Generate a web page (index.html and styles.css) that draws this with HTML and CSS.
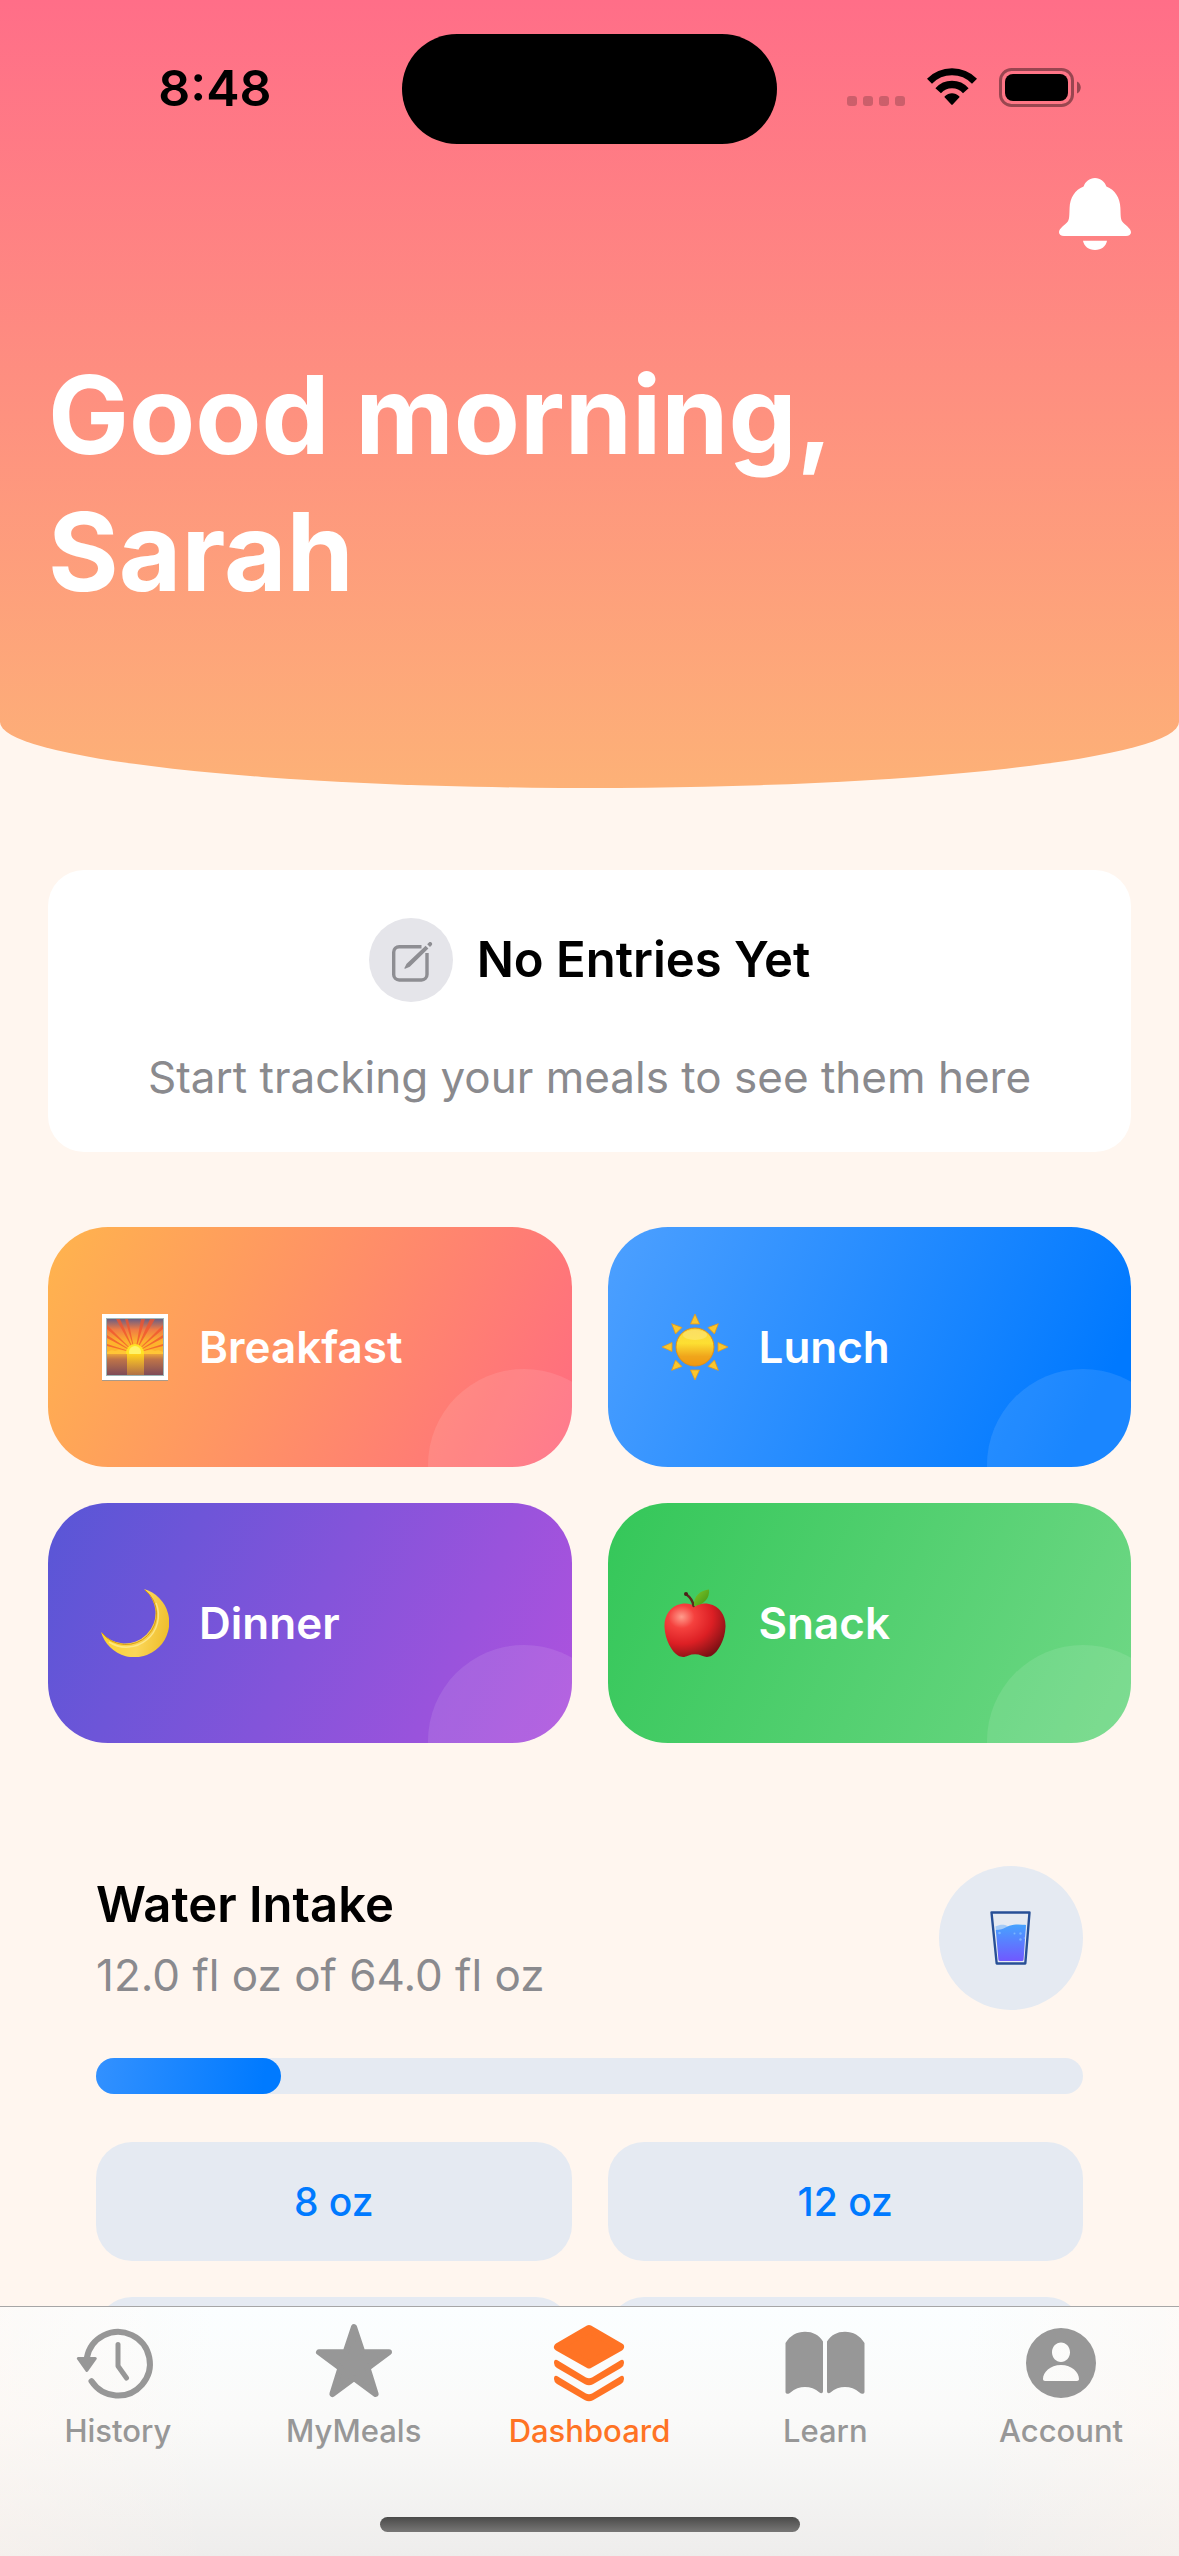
FILE: index.html
```html
<!DOCTYPE html>
<html lang="en">
<head>
<meta charset="utf-8">
<meta name="viewport" content="width=device-width, initial-scale=1">
<title>Dashboard</title>
<link rel="stylesheet" href="styles.css">
</head>
<body>
<div class="app">
  <div class="scroll">
    <header class="hero">
      <div class="status">
        <span class="status-side time">8:48</span>
        <span class="island"></span>
        <span class="status-side">
          <svg width="58" height="38" viewBox="0 0 58 38" fill="#000" fill-opacity=".2" aria-hidden="true">
            <rect x="0" y="28" width="10" height="10" rx="3"/><rect x="16" y="28" width="10" height="10" rx="3"/><rect x="32" y="28" width="10" height="10" rx="3"/><rect x="48" y="28" width="10" height="10" rx="3"/>
          </svg>
          <svg width="50" height="38" viewBox="0 0 50 38" fill="none" stroke="#000" aria-hidden="true">
            <path stroke-width="7" d="M2.500 13.200A31.500 31.500 0 0 1 47.500 13.200"/>
            <path stroke-width="7.500" d="M11.200 22.800A18.500 18.500 0 0 1 38.800 22.800"/>
            <path fill="#000" stroke="none" d="M17.800 29.600c-.5-.5-.5-1 0-1.400 4.200-4 10.200-4 14.400 0 .5.4.5.9 0 1.400L25.700 36.600c-.4.4-1 .4-1.400 0z"/>
          </svg>
          <svg width="82" height="39" viewBox="0 0 82 39" aria-hidden="true">
            <rect x="1.500" y="1.500" width="72" height="36" rx="11" fill="none" stroke="#000" stroke-opacity=".4" stroke-width="3"/>
            <rect x="6" y="6" width="63" height="27" rx="8"/>
            <path fill-opacity=".4" d="M78 13.500c5 2 5 10 0 12z"/>
          </svg>
        </span>
      </div>
      <div class="hero-actions">
        <button class="bell" type="button" aria-label="Notifications">
          <svg width="72" height="72" viewBox="0 0 72 72" fill="#fff" aria-hidden="true">
            <path d="M36 0c5.500 0 9.700 3.600 11.400 8.500C56 11.500 61 20 61.400 30c.3 7 .1 11 1.800 13.500 2.400 3.400 8.800 6.500 8.800 10.800 0 2.300-2 3.700-5 3.700H5c-3 0-5-1.400-5-3.700 0-4.300 6.400-7.400 8.800-10.800 1.700-2.500 1.500-6.500 1.800-13.500C11 20 16 11.500 24.600 8.500 26.300 3.600 30.500 0 36 0z"/>
            <path d="M24 62.700h24c-1 5.300-5.500 9.300-12 9.300s-11-4-12-9.300z"/>
          </svg>
        </button>
      </div>
      <h1 class="greeting">Good morning,<br>Sarah</h1>
    </header>

    <main class="content">
      <section class="empty">
        <div class="empty-head">
          <span class="empty-icon">
            <svg width="48" height="48" viewBox="0 0 48 48" fill="none" stroke="#8e8e93" stroke-width="3.400" aria-hidden="true">
              <path d="M34.500 10.700H12.200a5.500 5.500 0 0 0-5.500 5.500v22.300a5.500 5.500 0 0 0 5.500 5.500h22.300a5.500 5.500 0 0 0 5.500-5.500V17"/>
              <path fill="#8e8e93" stroke="none" d="M38.600 9.700l2.800 2.800-18.600 18.300-4.600 2c-.6.200-1-.2-.8-.8l2.200-4.200zM40.200 8.200l1.700-1.700c1.800-1.600 4.400 1 2.800 2.800L43 11z"/>
            </svg>
          </span>
          <h2 class="title">No Entries Yet</h2>
        </div>
        <p class="subtitle">Start tracking your meals to see them here</p>
      </section>

      <section class="meals">
        <button class="meal breakfast" type="button">
          <svg width="68" height="68" viewBox="0 0 68 68" aria-hidden="true">
            <defs>
              <linearGradient id="sky" x2="0" y2="1"><stop offset="0" stop-color="#6a5f83"/><stop offset=".3" stop-color="#ef7b45"/><stop offset=".65" stop-color="#fdb32c"/></linearGradient>
              <linearGradient id="sea" x2="0" y2="1"><stop offset="0" stop-color="#eaa13a"/><stop offset=".25" stop-color="#bf7448"/><stop offset="1" stop-color="#7f4b58"/></linearGradient>
              <linearGradient id="glint" x2="0" y2="1"><stop offset="0" stop-color="#ffd21f"/><stop offset="1" stop-color="#d08a3a" stop-opacity=".6"/></linearGradient>
            </defs>
            <rect x="1" y="2" width="66" height="66" fill="#a99a8a"/>
            <rect x="1" y="1" width="66" height="66" fill="#fff"/>
            <rect x="5" y="5" width="58" height="58" fill="#9fb5b5"/>
            <rect x="6" y="6" width="56" height="35" fill="url(#sky)"/>
            <g fill="#f0532d" fill-opacity=".75">
              <path d="M34 40L15 6h4zM34 40L24 6h3zM34 40L40 6h4zM34 40L49 6h5zM34 40L6 12v4zM34 40L6 22v3zM34 40L6 31v2zM34 40L62 12v4zM34 40L62 22v3zM34 40L62 31v2z"/>
            </g>
            <path fill="#ffc93a" fill-opacity=".8" d="M6 39q4-3 8-1 5-2 9 0h22q5-2 9 0 4-2 8 1v3H6z"/>
            <circle cx="34" cy="40" r="9" fill="#ffe324"/><circle cx="34" cy="39" r="6" fill="#fff36b"/>
            <rect x="6" y="41" width="56" height="21" fill="url(#sea)"/>
            <rect x="26" y="41" width="17" height="21" fill="url(#glint)"/>
          </svg>
          <span>Breakfast</span>
        </button>
        <button class="meal lunch" type="button">
          <svg width="68" height="68" viewBox="0 0 68 68" aria-hidden="true">
            <defs>
              <linearGradient id="sun" x2="0" y2="1"><stop offset="0" stop-color="#fbd63a"/><stop offset=".4" stop-color="#fddf32"/><stop offset=".75" stop-color="#f0a51b"/><stop offset="1" stop-color="#f0980f"/></linearGradient>
              <path id="ray" d="M34 1l4.500 10h-9z"/>
            </defs>
            <g fill="#fbc62c" stroke="#e39a1c" stroke-width=".8" stroke-linejoin="round">
              <use href="#ray"/><use href="#ray" transform="rotate(45 34 34)"/><use href="#ray" transform="rotate(90 34 34)"/><use href="#ray" transform="rotate(135 34 34)"/><use href="#ray" transform="rotate(180 34 34)"/><use href="#ray" transform="rotate(225 34 34)"/><use href="#ray" transform="rotate(270 34 34)"/><use href="#ray" transform="rotate(315 34 34)"/>
            </g>
            <circle cx="34" cy="34" r="19" fill="url(#sun)" stroke="#e58f12"/>
            <ellipse cx="34" cy="22" rx="12" ry="5" fill="#fff" fill-opacity=".2"/>
          </svg>
          <span>Lunch</span>
        </button>
        <button class="meal dinner" type="button">
          <svg width="68" height="68" viewBox="0 0 68 68" aria-hidden="true">
            <defs><linearGradient id="moon" x1="0" y1=".6" x2="1" y2=".8"><stop offset="0" stop-color="#fbd22c"/><stop offset=".55" stop-color="#fbd658"/><stop offset="1" stop-color="#edbb27"/></linearGradient></defs>
            <path fill="url(#moon)" d="M43 0A34.800 34.800 0 1 1 0 43A30.600 30.600 0 1 0 43 0z"/>
            <path fill="none" stroke="#d79b12" stroke-width="1" d="M1 44A30.600 30.600 0 1 0 44 1"/>
            <path fill="none" stroke="#fff0a0" stroke-opacity=".7" stroke-width="1.500" d="M8 53A32 32 0 0 0 55 14"/>
          </svg>
          <span>Dinner</span>
        </button>
        <button class="meal snack" type="button">
          <svg width="68" height="68" viewBox="0 0 68 68" aria-hidden="true">
            <defs>
              <radialGradient id="apple" cx=".28" cy=".25" r=".85"><stop offset="0" stop-color="#ff9c8c"/><stop offset=".25" stop-color="#f5413e"/><stop offset=".6" stop-color="#dc1f24"/><stop offset="1" stop-color="#7a1014"/></radialGradient>
              <linearGradient id="leaf" x2="1" y2="1"><stop offset="0" stop-color="#7fc62d"/><stop offset="1" stop-color="#3f9410"/></linearGradient>
            </defs>
            <path fill="url(#apple)" d="M34 17.500c4-3 9-3.500 14-2.500 11 2 17 12 16.500 23C64 51 57 63 51 66.500c-4 2.200-7 1.500-10 .2-4.500-1.800-9.500-1.800-14 0-3 1.300-6 2-10-.2C11 63 4 51 3.500 38 3 27 9 17 20 15c5-1 10-.5 14 2.500z"/>
            <path fill="none" stroke="#5a2a1c" stroke-width="2.500" stroke-linecap="round" d="M32.500 17c-.5-5-3-8.500-7-11.500"/>
            <circle cx="25" cy="5" r="2" fill="#4b2018"/>
            <path fill="url(#leaf)" d="M33 17c-1-10 7-16 15-16.500C49 9 43 16 33 17z"/>
          </svg>
          <span>Snack</span>
        </button>
      </section>

      <section class="water">
        <div class="water-head">
          <div class="water-text">
            <h2 class="title">Water Intake</h2>
            <p class="subtitle">12.0 fl oz of 64.0 fl oz</p>
          </div>
          <span class="glass">
            <svg width="42" height="54" viewBox="0 0 42 54" aria-hidden="true">
              <defs><linearGradient id="liquid" x2="0" y2="1"><stop offset="0" stop-color="#46a3ff"/><stop offset="1" stop-color="#7058ff"/></linearGradient></defs>
              <path fill="#a5cbf7" d="M5.500 15.500c5-2.500 9-2 12-.5 6 1.500 10 0 18-1.500v6H6z"/>
              <path fill="url(#liquid)" d="M5.800 19c9-.3 11-4.500 18-5.300 4-.5 8-.2 12.200.3L33.600 48.500q-.1 1.500-1.600 1.500H10q-1.500 0-1.600-1.500z"/>
              <g fill="#8cc4ff" fill-opacity=".7"><circle cx="9.500" cy="22" r="1.300"/><circle cx="24.500" cy="22.500" r="1"/><circle cx="30.500" cy="22.500" r="1.200"/><circle cx="30.500" cy="28.500" r="1.200"/><circle cx="34.500" cy="27" r=".8"/></g>
              <path fill="none" stroke="#274f96" stroke-width="2.400" stroke-linejoin="round" d="M1.500 1.500h38L35.300 52.500H6.700z"/>
            </svg>
          </span>
        </div>
        <div class="track" role="progressbar" aria-label="Water intake" aria-valuemin="0" aria-valuemax="64" aria-valuenow="12">
          <div class="fill" style="width: 18.75%"></div>
        </div>
        <div class="amounts">
          <button class="amount" type="button">8 oz</button>
          <button class="amount" type="button">12 oz</button>
          <button class="amount" type="button" aria-label="Larger amount"></button>
          <button class="amount" type="button" aria-label="Custom amount"></button>
        </div>
      </section>
    </main>
  </div>

  <footer class="dock">
    <nav class="tabs">
      <a class="tab" href="#history">
        <svg width="84" height="84" viewBox="0 0 84 84" fill="none" stroke="currentColor" stroke-width="6" stroke-linecap="round" stroke-linejoin="round" aria-hidden="true">
          <path d="M10.800 37A31.800 31.800 0 1 1 15.500 60.200"/>
          <path stroke-width="5" d="M42 23.500V45l8.500 12"/>
          <path fill="currentColor" stroke-width="3" d="M2.300 37.500h17L10.800 49.500z"/>
        </svg>
        <span>History</span>
      </a>
      <a class="tab" href="#mymeals">
        <svg width="84" height="84" viewBox="0 0 84 84" fill="currentColor" stroke="currentColor" stroke-width="6" stroke-linejoin="round" aria-hidden="true">
          <path d="M42 6l8.400 25.200H77L55.500 47 63.600 73 42 57.200 20.400 73 28.500 47 7 31.200h26.600z"/>
        </svg>
        <span>MyMeals</span>
      </a>
      <a class="tab active" href="#dashboard" aria-current="page">
        <svg width="84" height="84" viewBox="0 0 84 84" fill="currentColor" aria-hidden="true">
          <path stroke="currentColor" stroke-width="8" stroke-linejoin="round" d="M42 8l31 18-31 17.500-31-17.500z"/>
          <path d="M7 42q0-4 3-3l29 17.500q3 1.500 6 0L74 39q3-1 3 3 0 3-3 5L46 63.200q-4 2-8 0L10 47q-3-2-3-5z"/>
          <path d="M7 58q0-4 3-3l29 17.500q3 1.500 6 0L74 55q3-1 3 3 0 3-3 5L46 79.200q-4 2-8 0L10 63q-3-2-3-5z"/>
        </svg>
        <span>Dashboard</span>
      </a>
      <a class="tab" href="#learn">
        <svg width="84" height="84" viewBox="0 0 84 84" fill="currentColor" aria-hidden="true">
          <path d="M2.500 22C7 14.500 14 10.700 22 10.700S36 14 40 20.500V70c0 2.500-2 2.800-3.500 1.500-8.500-7.200-20.500-7.200-29 0C5.500 73.500 2.500 73 2.500 71zM81.500 22C77 14.500 70 10.700 62 10.700S48 14 44 20.500V70c0 2.500 2 2.800 3.500 1.500 8.500-7.200 20.500-7.200 29 0 2 2 5 1.500 5-.5z"/>
        </svg>
        <span>Learn</span>
      </a>
      <a class="tab" href="#account">
        <svg width="84" height="84" viewBox="0 0 84 84" fill="currentColor" aria-hidden="true">
          <path fill-rule="evenodd" d="M42 7a35 35 0 1 1 0 70 35 35 0 1 1 0-70zM42 21.500c-5 0-9 4.300-9 9.800s4 9.700 9 9.700 9-4.200 9-9.700-4-9.800-9-9.800zM42 44c-11 0-18 7.500-18 14 0 1.300.8 2 2 2h32c1.200 0 2-.7 2-2 0-6.500-7-14-18-14z"/>
        </svg>
        <span>Account</span>
      </a>
    </nav>
    <div class="home-bar"></div>
  </footer>
</div>
</body>
</html>
```
FILE: styles.css
```css
* {
  box-sizing: border-box;
}

body {
  margin: 0;
  background: #fff6ef;
  color: #000;
  font-family: Inter, "Liberation Sans", sans-serif;
}

h1,
h2,
p {
  margin: 0;
}

button {
  border: 0;
  padding: 0;
  background: none;
  font: inherit;
  cursor: pointer;
}

svg {
  display: block;
  flex: none;
}

.app {
  display: flex;
  flex-direction: column;
  height: 100vh;
}

.scroll {
  flex: 1;
  min-height: 0;
  overflow-y: auto;
  scrollbar-width: none;
}

/* Header */
.hero {
  padding: 34px 48px 168px;
  background: linear-gradient(#ff6e88, #fdb177);
  border-radius: 0 0 50% 50% / 0 0 66px 66px;
  color: #fff;
}

.status {
  display: grid;
  grid-template-columns: 1fr 375px 1fr;
  align-items: center;
  margin: 0 -20px;
  color: #000;
}

.status-side {
  display: flex;
  justify-content: center;
  gap: 22px;
  padding-bottom: 3px;
}

.time {
  font-size: 50px;
  font-weight: 600;
  line-height: 60px;
}

.island {
  height: 110px;
  border-radius: 55px;
  background: #000;
}

.hero-actions {
  display: flex;
  justify-content: flex-end;
  margin-top: 34px;
}

.greeting {
  margin-top: 96px;
  font-size: 108px;
  font-weight: 700;
  line-height: 137px;
}

/* Content */
.content {
  display: flex;
  flex-direction: column;
  gap: 75px;
  padding: 82px 48px 48px;
}

.title {
  font-size: 49px;
  font-weight: 600;
  line-height: 62px;
}

.subtitle {
  color: #8a8a8e;
  font-size: 44px;
  line-height: 54px;
}

.empty {
  display: flex;
  flex-direction: column;
  align-items: center;
  gap: 48px;
  padding: 48px;
  border-radius: 36px;
  background: #fff;
}

.empty-head {
  display: flex;
  align-items: center;
  gap: 24px;
}

.empty-icon {
  display: grid;
  place-items: center;
  width: 84px;
  height: 84px;
  border-radius: 50%;
  background: #e5e5ea;
}

.meals {
  display: grid;
  grid-template-columns: 1fr 1fr;
  gap: 36px;
}

.meal {
  position: relative;
  display: flex;
  align-items: center;
  gap: 30px;
  height: 240px;
  padding: 0 53px;
  border-radius: 60px;
  overflow: hidden;
  color: #fff;
  font-size: 44px;
  font-weight: 600;
  line-height: 54px;
}

.meal::after {
  content: "";
  position: absolute;
  right: -48px;
  bottom: -94px;
  width: 192px;
  height: 192px;
  border-radius: 50%;
  background: rgba(255, 255, 255, 0.1);
}

.breakfast {
  background: linear-gradient(115deg, #ffb44d, #ff6b81);
}

.lunch {
  background: linear-gradient(115deg, #4da0ff, #0079ff 90%);
}

.dinner {
  background: linear-gradient(115deg, #5856d6, #af52de);
}

.snack {
  background: linear-gradient(115deg, #34c759, #70d886);
}

/* Water */
.water {
  display: flex;
  flex-direction: column;
  gap: 48px;
  padding: 48px;
}

.water-head {
  display: flex;
  align-items: center;
  justify-content: space-between;
}

.water-text {
  display: flex;
  flex-direction: column;
  gap: 12px;
}

.glass {
  display: grid;
  place-items: center;
  width: 144px;
  height: 144px;
  border-radius: 50%;
  background: #e5eaf2;
}

.track {
  height: 36px;
  border-radius: 18px;
  background: #e5eaf2;
}

.fill {
  height: 100%;
  border-radius: 18px;
  background: linear-gradient(100deg, #3391ff, #007aff 90%);
}

.amounts {
  display: grid;
  grid-template-columns: 1fr 1fr;
  gap: 36px;
}

.amount {
  height: 119px;
  border-radius: 36px;
  background: #e5eaf2;
  color: #007aff;
  font-size: 39px;
  font-weight: 500;
  line-height: 48px;
}

/* Bottom bar */
.dock {
  padding: 14px 0 24px;
  border-top: 1px solid #a6a6a6;
  background:
    linear-gradient(90deg, rgba(255, 245, 238, 0.4), rgba(255, 245, 238, 0) 18%, rgba(255, 245, 238, 0) 82%, rgba(255, 245, 238, 0.4)),
    linear-gradient(#fbfeff, #fafaf9 45%, #eeedec);
}

.tabs {
  display: grid;
  grid-template-columns: repeat(5, 1fr);
}

.tab {
  display: flex;
  flex-direction: column;
  align-items: center;
  gap: 8px;
  color: #979797;
  font-size: 31px;
  font-weight: 500;
  line-height: 36px;
  text-decoration: none;
}

.active {
  color: #ff7324;
}

.home-bar {
  width: 420px;
  height: 15px;
  margin: 68px auto 0;
  border-radius: 8px;
  background: linear-gradient(#4a4a49, #787776);
}
```
